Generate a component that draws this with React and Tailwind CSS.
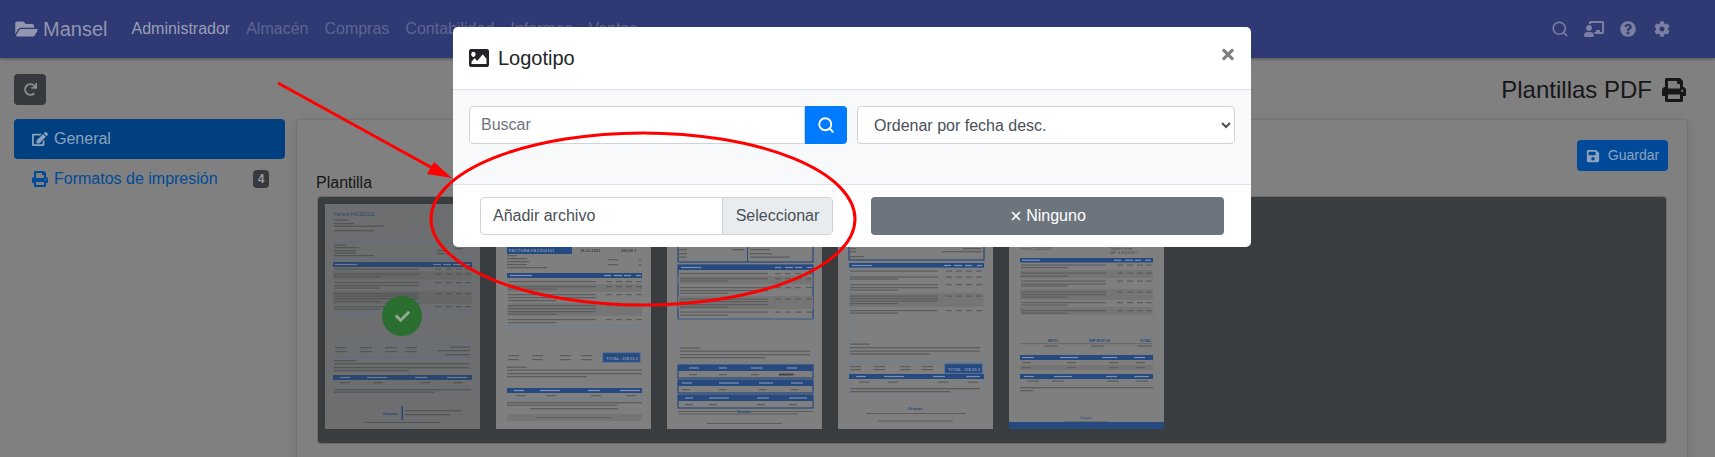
import { FaChalkboardTeacher, FaCheck, FaCog, FaEdit, FaFolderOpen, FaImage, FaPrint, FaQuestionCircle, FaRedo, FaSave, FaTimes } from 'react-icons/fa';
import { Search, X } from 'lucide-react';

const BLUE = '#26497f';
const LINE = '#5c5c5c';
const ZEBRA = '#757575';
const SOFT = '#6f7f95';

// one row of tiny text in a page preview: [y, x, width]
function Lines({ rows, color = LINE, h = 1.3 }) {
  return rows.map(([y, x, w], i) => <rect key={i} x={x} y={y} width={w} height={h} fill={color} />);
}

function Cols({ ys, xs, w = 6 }) {
  return ys.flatMap((y, i) => xs.map((x, j) => <rect key={`${i}-${j}`} x={x} y={y} width={w} height={1.2} fill={LINE} />));
}

function Bar({ x, y, w, h = 5, cols = [] }) {
  return (
    <g>
      <rect x={x} y={y} width={w} height={h} fill={BLUE} />
      {cols.map(([cx, cw], i) => <rect key={i} x={cx} y={y + h / 2 - 0.6} width={cw} height={1.2} fill="#7f91b0" />)}
    </g>
  );
}

function ItemRows({ x, w, groups, numXs }) {
  return groups.map((ys, i) => (
    <g key={i}>
      {ys.map((y, j) => <rect key={j} x={x} y={y} width={j === ys.length - 1 && ys.length > 1 ? w * 0.55 : w} height={1.2} fill={LINE} />)}
      <Cols ys={[ys[0]]} xs={numXs} />
    </g>
  ));
}

function Thumb1() {
  return (
    <svg viewBox="0 0 155 225" className="w-full h-full blur-[0.5px]">
      <rect width="155" height="225" fill="#7f7f7f" />
      <text x="9" y="12" fontSize="4.6" fontFamily="Liberation Sans" fill={BLUE}>Factura FAC202101</text>
      <Lines rows={[[15.5, 9, 14], [19, 9, 20], [21.5, 9, 50], [26, 9, 40]]} />
      <circle cx="135" cy="17" r="7" fill="#444" />
      <rect x="8" y="38" width="139" height="1.5" fill={SOFT} />
      <Lines rows={[[40.5, 9, 12], [43, 9, 25], [46, 9, 22], [48.5, 9, 22], [51, 9, 40], [46, 112, 8], [49, 112, 8], [44, 130, 8]]} />
      <rect x="8" y="54" width="139" height="1.5" fill={SOFT} />
      <Bar x={8} y={58} w={139} cols={[[10, 22], [108, 8], [118, 8], [128, 8], [138, 7]]} />
      <rect x="8" y="67.5" width="139" height="8" fill={ZEBRA} />
      <rect x="8" y="87" width="139" height="13" fill={ZEBRA} />
      <ItemRows x={9} w={85} numXs={[110, 121, 131, 140]} groups={[[64.5], [69.5, 72], [78, 81, 83.5], [89, 91.5, 94, 97], [102, 104.5]]} />
      <rect x="8" y="108" width="139" height="1.5" fill={SOFT} />
      <rect x="8" y="138" width="139" height="1.5" fill={SOFT} />
      <Cols ys={[143, 147]} xs={[10, 35, 60, 80]} w={12} />
      <Lines rows={[[142.5, 125, 20], [146, 112, 33], [150, 120, 25]]} />
      <rect x="8" y="152" width="139" height="1.5" fill={SOFT} />
      <Lines rows={[[156, 9, 22], [159, 9, 135], [163, 9, 135], [166, 9, 75]]} />
      <Bar x={8} y={171} w={139} cols={[[15, 10], [42, 20], [90, 12], [122, 20]]} />
      <Cols ys={[178]} xs={[15, 48, 95, 128]} w={10} />
      <rect x="8" y="181" width="139" height="1" fill={SOFT} />
      <Lines rows={[[185, 9, 137], [187.5, 9, 100]]} />
      <text x="58" y="211" fontSize="4" fontWeight="bold" fontFamily="Liberation Sans" fill={BLUE}>Gracias</text>
      <rect x="76.5" y="202" width="1.5" height="14" fill={BLUE} />
      <Lines rows={[[206, 80, 57], [210, 80, 45]]} />
      <Lines rows={[[218, 40, 75]]} h={1} />
    </svg>
  );
}

function Thumb2() {
  return (
    <svg viewBox="0 0 155 225" className="w-full h-full blur-[0.5px]">
      <rect width="155" height="225" fill="#7f7f7f" />
      <rect x="11" y="41" width="65" height="9" fill={BLUE} />
      <text x="13" y="48" fontSize="4.4" fontWeight="bold" fontFamily="Liberation Sans" fill="#7f91b0">FACTURA FAC202101</text>
      <text x="84" y="48" fontSize="4" fontWeight="bold" fontFamily="Liberation Sans" fill="#444">18-12-2021</text>
      <text x="125" y="48" fontSize="4" fontWeight="bold" fontFamily="Liberation Sans" fill="#444">280,85 €</text>
      <Lines rows={[[51, 11, 10], [54, 11, 20], [57, 11, 22], [60, 11, 20], [63, 11, 40], [55, 112, 10], [60, 112, 10], [55, 143, 2], [60, 143, 2]]} />
      <Bar x={11} y={69} w={135} cols={[[14, 22], [108, 7], [118, 8], [128, 7], [140, 5]]} />
      <rect x="11" y="80" width="135" height="8" fill={ZEBRA} />
      <rect x="11" y="99" width="135" height="13" fill={ZEBRA} />
      <ItemRows x={12} w={88} numXs={[110, 120, 130, 140]} groups={[[77], [82, 84.5], [90, 93, 96], [101, 104, 107, 109.5], [115, 118]]} />
      <rect x="10" y="121" width="137" height="2" fill={SOFT} />
      <Cols ys={[151, 155]} xs={[12, 36, 64, 85]} w={11} />
      <rect x="107" y="149" width="37" height="9" fill={BLUE} stroke="#365f9c" strokeWidth="1" />
      <text x="110" y="155.5" fontSize="4.2" fontWeight="bold" fontFamily="Liberation Sans" fill="#7f91b0">TOTAL: 258,65 €</text>
      <Lines rows={[[162.5, 11, 20], [165.5, 11, 135], [169, 11, 135], [172, 11, 80]]} />
      <Bar x={11} y={184} w={135} cols={[[18, 10], [44, 20], [92, 12], [124, 20]]} />
      <Cols ys={[191]} xs={[20, 50, 95, 130]} w={10} />
      <rect x="10" y="194" width="137" height="1.2" fill={SOFT} />
      <Lines rows={[[198, 11, 135], [200.5, 11, 110], [204, 34, 88]]} />
      <rect x="11" y="210" width="135" height="7" fill={ZEBRA} />
      <Lines rows={[[213, 40, 75]]} h={1} />
    </svg>
  );
}

function MiniTable({ y, labels, total }) {
  return (
    <g>
      <rect x="11" y={y} width="135" height="13" fill="none" stroke={BLUE} strokeWidth="1.2" />
      <Bar x={11} y={y} w={135} h={6} cols={labels} />
      <Cols ys={[y + 9]} xs={labels.map(([x]) => x)} w={8} />
      {total && <rect x="112" y={y + 8.5} width="14" height="2" fill="#444" />}
    </g>
  );
}

function Thumb3() {
  return (
    <svg viewBox="0 0 155 225" className="w-full h-full blur-[0.5px]">
      <rect width="155" height="225" fill="#7f7f7f" />
      <rect x="11" y="38" width="135" height="20" fill="none" stroke={BLUE} strokeWidth="1.2" />
      <rect x="80" y="38" width="1" height="20" fill={BLUE} />
      <Lines rows={[[45, 12, 8], [49, 12, 8], [52.5, 12, 8], [45, 65, 12], [45, 83, 20], [49, 83, 22], [52.5, 83, 40]]} />
      <rect x="11" y="61" width="135" height="54" fill="none" stroke={BLUE} strokeWidth="1.2" />
      <Bar x={11} y={61} w={135} cols={[[14, 20], [108, 6], [118, 8], [128, 7], [140, 5]]} />
      <rect x="11" y="72" width="135" height="8" fill={ZEBRA} />
      <rect x="11" y="92" width="135" height="13" fill={ZEBRA} />
      <ItemRows x={13} w={88} numXs={[108, 118, 128, 139]} groups={[[69], [74, 76.5], [83, 86, 88.5], [94.5, 97, 100, 102.5], [107.5, 110.5]]} />
      <rect x="11" y="115" width="135" height="43" fill="none" stroke={SOFT} strokeWidth="0.8" />
      <Lines rows={[[143.5, 13, 20], [146.5, 13, 130], [150, 13, 130], [153, 13, 85]]} />
      <MiniTable y={161} total labels={[[22, 10], [52, 8], [84, 12], [120, 10]]} />
      <MiniTable y={176} labels={[[15, 10], [52, 20], [92, 14], [124, 12]]} />
      <MiniTable y={191} labels={[[18, 8], [42, 20], [90, 12], [122, 18]]} />
      <Lines rows={[[207, 11, 135], [209.5, 11, 120], [219, 40, 75]]} h={1} />
      <text x="70" y="208.5" fontSize="3.8" fontWeight="bold" fontFamily="Liberation Sans" fill={BLUE}>Gracias</text>
    </svg>
  );
}

function Thumb4() {
  return (
    <svg viewBox="0 0 155 225" className="w-full h-full blur-[0.5px]">
      <rect width="155" height="225" fill="#7f7f7f" />
      <rect x="11" y="38" width="135" height="18" fill="none" stroke={BLUE} strokeWidth="1.2" />
      <Lines rows={[[44, 12, 6], [47, 12, 6], [52, 12, 14], [44, 125, 18], [47, 104, 40]]} />
      <Bar x={11} y={59} w={135} cols={[[14, 20], [106, 7], [116, 8], [127, 7], [139, 5]]} />
      <rect x="11" y="89" width="135" height="14" fill={ZEBRA} />
      <ItemRows x={12} w={88} numXs={[108, 118, 128, 138]} groups={[[66.5], [72.5, 74.5], [80, 83, 85.5], [91.5, 94, 96.5, 99], [106, 108.5]]} />
      <rect x="11" y="64" width="135" height="95" fill="none" stroke={SOFT} strokeWidth="0.8" />
      <Lines rows={[[139.5, 12, 20], [143, 12, 130], [146.5, 12, 130], [149.5, 12, 80]]} />
      <rect x="11" y="158" width="135" height="33" fill="none" stroke={SOFT} strokeWidth="0.8" />
      <Cols ys={[162, 165]} xs={[12, 36, 62, 84]} w={11} />
      <rect x="107" y="160" width="37" height="9" fill={BLUE} stroke="#365f9c" strokeWidth="1" />
      <text x="110" y="166.5" fontSize="4.2" fontWeight="bold" fontFamily="Liberation Sans" fill="#7f91b0">TOTAL: 258,65 €</text>
      <Bar x={11} y={170} w={135} cols={[[18, 10], [46, 20], [95, 12], [128, 14]]} />
      <Cols ys={[177.5]} xs={[21, 50, 100, 130]} w={10} />
      <Lines rows={[[184, 12, 130], [187, 12, 100]]} />
      <text x="70" y="206" fontSize="4" fontWeight="bold" fontFamily="Liberation Sans" fill={BLUE}>Gracias</text>
      <Lines rows={[[209, 28, 100], [216.5, 40, 75]]} h={1} />
    </svg>
  );
}

function Thumb5() {
  return (
    <svg viewBox="0 0 155 225" className="w-full h-full blur-[0.5px]">
      <rect width="155" height="225" fill="#7f7f7f" />
      <text x="12" y="46" fontSize="3.6" fontFamily="Liberation Sans" fill="#4c4c4c">Fecha: 12-08-2020</text>
      <text x="101" y="46" fontSize="3.6" fontFamily="Liberation Sans" fill="#4c4c4c">Trujillo Fuente</text>
      <text x="101" y="50" fontSize="3.6" fontFamily="Liberation Sans" fill="#4c4c4c">NIF: S 8943765 J</text>
      <Bar x={11} y={54} w={133} h={4.5} cols={[[13, 18], [105, 7], [116, 8], [126, 6], [136, 6]]} />
      <rect x="11" y="66" width="133" height="8" fill={ZEBRA} />
      <rect x="11" y="85" width="133" height="11" fill={ZEBRA} />
      <rect x="11" y="103" width="133" height="7.5" fill={ZEBRA} />
      <ItemRows x={12} w={85} numXs={[108, 118, 128, 137]} groups={[[60.5, 63], [68.5, 71.5], [76.5, 79.5, 81.5], [87.5, 90, 92.5], [98, 100.5], [106, 108.5]]} />
      <text x="39" y="138" fontSize="3.6" fontWeight="bold" fontFamily="Liberation Sans" fill={BLUE}>NETO</text>
      <text x="80" y="138" fontSize="3.6" fontWeight="bold" fontFamily="Liberation Sans" fill={BLUE}>IMPUESTOS</text>
      <text x="131" y="138" fontSize="3.6" fontWeight="bold" fontFamily="Liberation Sans" fill={BLUE}>TOTAL</text>
      <rect x="11" y="139.5" width="133" height="0.6" fill="#555" />
      <Lines rows={[[141.5, 35, 14], [141.5, 82, 13], [141.5, 128, 15]]} />
      <Bar x={11} y={151} w={133} cols={[[13, 12], [51, 18], [93, 15], [125, 11]]} />
      <rect x="11" y="161" width="133" height="5" fill={ZEBRA} />
      <Cols ys={[158, 163]} xs={[13, 58, 100, 127]} w={9} />
      <Bar x={11} y={170} w={133} cols={[[15, 10], [45, 18], [97, 11], [125, 15]]} />
      <Cols ys={[176.5]} xs={[18, 43, 98, 127]} w={12} />
      <Lines rows={[[183, 11, 133], [186, 11, 13]]} />
      <text x="71" y="215" fontSize="3.4" fontFamily="Liberation Sans" fill={BLUE}>Gracias</text>
      <Lines rows={[[217.5, 55, 44]]} h={1} />
      <rect y="218" width="155" height="7" fill={BLUE} />
    </svg>
  );
}

// tiny label for the top nav
function NavLink({ children, active }) {
  return <span className={active ? 'text-[#9a9eb4]' : 'text-[#5e6590]'}>{children}</span>;
}

export default function App() {
  return (
    <div className="relative h-[457px] w-[1715px] overflow-hidden bg-[#808080] font-['Liberation_Sans',sans-serif] text-[16px] text-[#161718]">
      {/* Navbar */}
      <header className="flex h-[58px] items-center bg-[#2f3a75] pl-[15px] pr-[45px] shadow-[0_1px_3px_rgba(0,0,0,0.35)]">
        <FaFolderOpen className="h-[20px] w-[23px] text-[#9296ae]" />
        <span className="ml-[5px] text-[20px] text-[#9296ae]">Mansel</span>
        <nav className="ml-[24px] flex gap-[16px]">
          <NavLink active>Administrador</NavLink>
          <NavLink>Almacén</NavLink>
          <NavLink>Compras</NavLink>
          <NavLink>Contabilidad</NavLink>
          <NavLink>Informes</NavLink>
          <NavLink>Ventas</NavLink>
        </nav>
        <div className="ml-auto flex items-center text-[#7b80a2]">
          <Search className="h-[18px] w-[18px]" strokeWidth={2} />
          <FaChalkboardTeacher className="ml-[15px] h-[16px] w-[20px]" />
          <FaQuestionCircle className="ml-[16px] h-[16px] w-[16px]" />
          <FaCog className="ml-[18px] h-[16px] w-[16px]" />
        </div>
      </header>

      <main className="pl-[14px] pr-[27px]">
        {/* Title row */}
        <div className="flex h-[45px] items-start justify-between pt-[16px] box-content">
          <button className="flex h-[31px] w-[32px] items-center justify-center rounded-[4px] bg-[#363a3e] text-[#8a8c8f]">
            <FaRedo className="h-[13px] w-[13px]" />
          </button>
          <div className="mr-[2px] flex items-center">
            <h1 className="text-[24px] font-normal leading-[31px]">Plantillas PDF</h1>
            <FaPrint className="ml-[10px] h-[24px] w-[24px]" />
          </div>
        </div>

        <div className="flex gap-[11px]">
          {/* Sidebar */}
          <aside className="w-[271px] shrink-0">
            <div className="flex h-[40px] items-center rounded-[4px] bg-[#004080] pl-[18px] text-[#8da2bd]">
              <FaEdit className="h-[16px] w-[16px]" />
              <span className="ml-[6px]">General</span>
            </div>
            <div className="flex h-[40px] items-center pl-[18px] pr-[16px] text-[#004a99]">
              <FaPrint className="h-[16px] w-[16px]" />
              <span className="ml-[6px]">Formatos de impresión</span>
              <span className="ml-auto flex h-[18px] w-[16px] items-center justify-center rounded-[4px] bg-[#363a3e] text-[12px] font-bold text-[#9a9c9e]">4</span>
            </div>
          </aside>

          {/* Card */}
          <section className="h-[400px] flex-1 rounded-[4px] border border-[#747474] bg-[#808080] pl-[20px] pr-[20px] pt-[20px] shadow-[0_4px_12px_rgba(0,0,0,0.12)]">
            <div className="flex justify-end">
              <button className="-mr-px flex h-[31px] w-[91px] items-center justify-center rounded-[4px] bg-[#004a99] text-[14px] text-[#8da2bd]">
                <FaSave className="h-[14px] w-[14px]" />
                <span className="ml-[8px]">Guardar</span>
              </button>
            </div>
            <div className="h-[24px] text-[16px] leading-[24px] -ml-px">Plantilla</div>
            <div className="mt-[1px] flex h-[248px] gap-[16px] rounded-[4px] border border-[#6a6a6a] bg-[#3a3d40] px-[7px] pt-[7px]">
              <div className="relative h-[225px] w-[155px] shrink-0">
                <div className="h-full w-full opacity-75">
                  <Thumb1 />
                </div>
                {/* selected mark */}
                <div className="absolute left-[57px] top-[92px] flex h-[40px] w-[40px] items-center justify-center rounded-full bg-[#2a6f2f] text-[#93a893]">
                  <FaCheck className="h-[15px] w-[15px]" />
                </div>
              </div>
              <div className="h-[225px] w-[155px] shrink-0"><Thumb2 /></div>
              <div className="h-[225px] w-[155px] shrink-0"><Thumb3 /></div>
              <div className="h-[225px] w-[155px] shrink-0"><Thumb4 /></div>
              <div className="h-[225px] w-[155px] shrink-0"><Thumb5 /></div>
            </div>
          </section>
        </div>
      </main>

      {/* Modal */}
      <div className="absolute left-[453px] top-[27px] flex h-[220px] w-[798px] flex-col overflow-hidden rounded-[5px] bg-white text-[#212529]">
        <div className="relative flex h-[63px] items-center border-b border-[#dee2e6] px-[16px]">
          <FaImage className="h-[24px] w-[20px]" preserveAspectRatio="none" />
          <h5 className="ml-[9px] text-[20px] font-normal">Logotipo</h5>
          <FaTimes className="absolute right-[16px] top-[19px] h-[17px] w-[14px] text-[#808080]" />
        </div>
        <div className="flex h-[95px] gap-[10px] border-b border-[#dee2e6] bg-[#f8f9fa] px-[16px] pt-[16px]">
          <div className="flex h-[38px] w-[378px]">
            <input placeholder="Buscar" className="min-w-0 flex-1 rounded-l-[4px] border border-[#ced4da] bg-white px-[11px] text-[16px] text-[#495057] placeholder:text-[#6c757d]" />
            <button className="flex w-[42px] items-center justify-center rounded-r-[4px] bg-[#007bff] text-white">
              <Search className="h-[18px] w-[18px]" strokeWidth={2.5} />
            </button>
          </div>
          <select className="h-[38px] flex-1 rounded-[4px] border border-[#ced4da] bg-white pl-[12px] pr-[4px] text-[16px] text-[#495057]">
            <option>Ordenar por fecha desc.</option>
          </select>
        </div>
        <div className="flex flex-1 gap-[38px] px-[27px] pt-[12px]">
          <div className="flex h-[38px] w-[353px] overflow-hidden rounded-[4px] border border-[#ced4da] text-[#495057]">
            <div className="flex flex-1 items-center pl-[12px]">Añadir archivo</div>
            <div className="flex w-[110px] items-center justify-center border-l border-[#ced4da] bg-[#e9ecef]">Seleccionar</div>
          </div>
          <button className="flex h-[38px] w-[353px] items-center justify-center rounded-[4px] bg-[#6c757d] text-white">
            <X className="h-[14px] w-[14px]" strokeWidth={3} />
            <span className="ml-[3px]">Ninguno</span>
          </button>
        </div>
      </div>

      {/* Red annotation drawn on top of the screenshot */}
      <svg className="pointer-events-none absolute left-0 top-0" width="1715" height="457" fill="none">
        <line x1="278" y1="83" x2="436" y2="170" stroke="#ff0000" strokeWidth="3" />
        <polygon points="452,178 427,174 434,162" fill="#ff0000" />
        <ellipse cx="643" cy="219" rx="212" ry="86" stroke="#ff0000" strokeWidth="3" />
      </svg>
    </div>
  );
}
